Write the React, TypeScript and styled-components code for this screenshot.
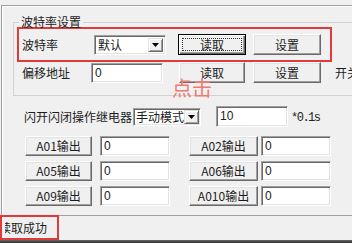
import React from 'react';
import styled, { createGlobalStyle, css } from 'styled-components';

const GlobalStyle = createGlobalStyle`
  html, body { margin:0; padding:0; background:#f0f0f0; }
  body {
    font-family:"Noto Sans CJK SC", "Noto Sans", sans-serif;
    font-size:12px;
    color:#1c1c1c;
  }
`;

const Window = styled.div`
  position:relative;
  width:352px;
  height:243px;
  overflow:hidden;
  background:#f0f0f0;
  display:flex;
  flex-direction:column;
`;

const TabPage = styled.div`
  margin:5px 0 0 1px;
  width:430px;
  height:211px;
  box-sizing:border-box;
  border-top:1px solid #a0a0a0;
  border-left:1px solid #a0a0a0;
  border-bottom:1px solid #a0a0a0;
  box-shadow:inset 1px 1px 0 #fff;
  display:flex;
  flex-direction:column;
  flex-shrink:0;
`;

const GroupBox = styled.fieldset`
  margin:10px 0 0 11px;
  padding:0 0 12px 3px;
  width:400px;
  min-width:0;
  border:1px solid #d2d2d2;
  box-sizing:border-box;
`;

const GroupTitle = styled.legend`
  margin-left:2px;
  padding:0 2px;
  font-size:12px;
  line-height:12px;
`;

const FieldRow = styled.div<{ $marked?: boolean }>`
  display:flex;
  align-items:center;
  box-sizing:border-box;
  padding-left:3px;
  ${p => p.$marked ? css`
    width:315px;
    height:35px;
    margin-top:-1px;
    border:2px solid #e23a3a;
  ` : css`
    height:21px;
    border-left:2px solid transparent;
  `}
`;

const Label = styled.span<{ $w: number }>`
  width:${p => p.$w}px;
  flex-shrink:0;
  white-space:nowrap;
  font-size:12px;
  line-height:14px;
`;

const sunken = css`
  box-sizing:border-box;
  background:#fff;
  border-top:1px solid #a0a0a0;
  border-left:1px solid #a0a0a0;
  border-right:1px solid #fff;
  border-bottom:1px solid #fff;
  box-shadow:inset 1px 1px 0 #696969, inset -1px -1px 0 #e3e3e3;
`;

const TextBox = styled.div<{ $w: number; $h: number }>`
  ${sunken};
  flex-shrink:0;
  width:${p => p.$w}px;
  height:${p => p.$h}px;
  padding:2px 0 0 3px;
  font-family:"Liberation Sans", Arial, sans-serif;
  font-size:12px;
  line-height:14px;
  color:#222;
`;

const Combo = styled.div<{ $w: number; $h: number; $pad: number }>`
  ${sunken};
  flex-shrink:0;
  display:flex;
  align-items:stretch;
  width:${p => p.$w}px;
  height:${p => p.$h}px;
  padding:${p => p.$pad}px;
`;

const ComboText = styled.span`
  flex:1;
  min-width:0;
  padding-left:1px;
  font-size:12px;
  line-height:14px;
  white-space:nowrap;
`;

const ComboArrow = styled.span`
  width:15px;
  flex-shrink:0;
  display:flex;
  align-items:center;
  justify-content:center;
  box-sizing:border-box;
  background:#f0f0f0;
  border:1px solid;
  border-color:#e3e3e3 #696969 #696969 #e3e3e3;
  box-shadow:inset 1px 1px 0 #fff, inset -1px -1px 0 #a0a0a0;
`;

const Btn = styled.div<{ $w?: number; $h?: number; $focus?: boolean }>`
  position:relative;
  flex-shrink:0;
  box-sizing:border-box;
  width:${p => p.$w ?? 68}px;
  height:${p => p.$h ?? 21}px;
  display:flex;
  align-items:center;
  justify-content:center;
  background:#f0f0f0;
  font-size:12px;
  line-height:14px;
  white-space:nowrap;
  border:1px solid;
  border-color:#fff #696969 #696969 #fff;
  box-shadow:inset -1px -1px 0 #a0a0a0, inset 1px 1px 0 #e3e3e3;
  ${p => p.$focus && css`
    border:1px solid #000;
    box-shadow:inset 1px 1px 0 #fff, inset -1px -1px 0 #696969, inset -2px -2px 0 #a0a0a0;
    &::after {
      content:'';
      position:absolute;
      inset:3px;
      border:1px dotted #333;
    }
  `}
`;

const Spacer = styled.span<{ $w: number }>`
  width:${p => p.$w}px;
  flex-shrink:0;
`;

const CutText = styled.span`
  white-space:nowrap;
  font-size:12px;
`;

const RelayRow = styled.div`
  display:flex;
  align-items:center;
  height:21px;
  margin:10px 0 0 22px;
`;

const Unit = styled.span`
  margin:2px 0 0 3px;
  font-family:"Liberation Mono", monospace;
  font-size:12px;
  letter-spacing:-1.5px;
  color:#222;
`;

const OutputGrid = styled.div`
  display:grid;
  grid-template-columns:164px auto;
  grid-auto-rows:20px;
  row-gap:5px;
  margin:9px 0 0 23px;
`;

const OutputCell = styled.div<{ $gap: number }>`
  display:flex;
  align-items:center;
  gap:${p => p.$gap}px;
`;

const StatusBar = styled.div`
  height:24px;
  display:flex;
  flex-shrink:0;
`;

const StatusCell = styled.div`
  width:59px;
  height:25px;
  margin-top:-1px;
  box-sizing:border-box;
  border:2px solid #e23a3a;
  padding-left:3px;
  display:flex;
  align-items:center;
`;

const StatusClip = styled.div`
  flex:1;
  overflow:hidden;
  white-space:nowrap;
`;

const StatusText = styled.span`
  display:inline-block;
  margin-left:-6px;
  font-size:12px;
  line-height:14px;
`;

const BottomEdge = styled.div`
  height:3px;
  background:linear-gradient(#6a6a6a, #2e2e2e);
  flex-shrink:0;
`;

const Annotation = styled.span`
  position:absolute;
  left:172px;
  top:77px;
  font-size:20px;
  line-height:22px;
  color:#ef7a70;
`;

const Arrow = () => (
  <svg width="7" height="4" viewBox="0 0 7 4">
    <polygon points="0,0 7,0 3.5,4" fill="#000" />
  </svg>
);

const outputs = [
  ['A01输出', 'A02输出'],
  ['A05输出', 'A06输出'],
  ['A09输出', 'A010输出'],
];

const App = () => {
  return (
    <Window>
      <GlobalStyle />
      <TabPage>
        <GroupBox>
          <GroupTitle>波特率设置</GroupTitle>
          <FieldRow $marked>
            <Label $w={72}>波特率</Label>
            <Combo $w={72} $h={20} $pad={2}>
              <ComboText>默认</ComboText>
              <ComboArrow><Arrow /></ComboArrow>
            </Combo>
            <Spacer $w={12} />
            <Btn $focus>读取</Btn>
            <Spacer $w={7} />
            <Btn>设置</Btn>
          </FieldRow>
          <FieldRow>
            <Label $w={69}>偏移地址</Label>
            <TextBox $w={72} $h={20}>0</TextBox>
            <Spacer $w={16} />
            <Btn $w={66}>读取</Btn>
            <Spacer $w={8} />
            <Btn>设置</Btn>
            <Spacer $w={14} />
            <CutText>开关量</CutText>
          </FieldRow>
        </GroupBox>

        <RelayRow>
          <Label $w={109}>闪开闪闭操作继电器</Label>
          <Combo $w={68} $h={18} $pad={1}>
            <ComboText>手动模式</ComboText>
            <ComboArrow><Arrow /></ComboArrow>
          </Combo>
          <Spacer $w={15} />
          <TextBox $w={72} $h={21}>10</TextBox>
          <Unit>*0.1s</Unit>
        </RelayRow>

        <OutputGrid>
          {outputs.map(([l, r]) => (
            <React.Fragment key={l}>
              <OutputCell $gap={8}>
                <Btn $w={67} $h={20}>{l}</Btn>
                <TextBox $w={70} $h={20}>0</TextBox>
              </OutputCell>
              <OutputCell $gap={3}>
                <Btn $w={69} $h={20}>{r}</Btn>
                <TextBox $w={70} $h={20}>0</TextBox>
              </OutputCell>
            </React.Fragment>
          ))}
        </OutputGrid>
      </TabPage>

      <StatusBar>
        <StatusCell>
          <StatusClip>
            <StatusText>读取成功</StatusText>
          </StatusClip>
        </StatusCell>
      </StatusBar>
      <BottomEdge />

      <Annotation>点击</Annotation>
    </Window>
  );
};

export default App;
